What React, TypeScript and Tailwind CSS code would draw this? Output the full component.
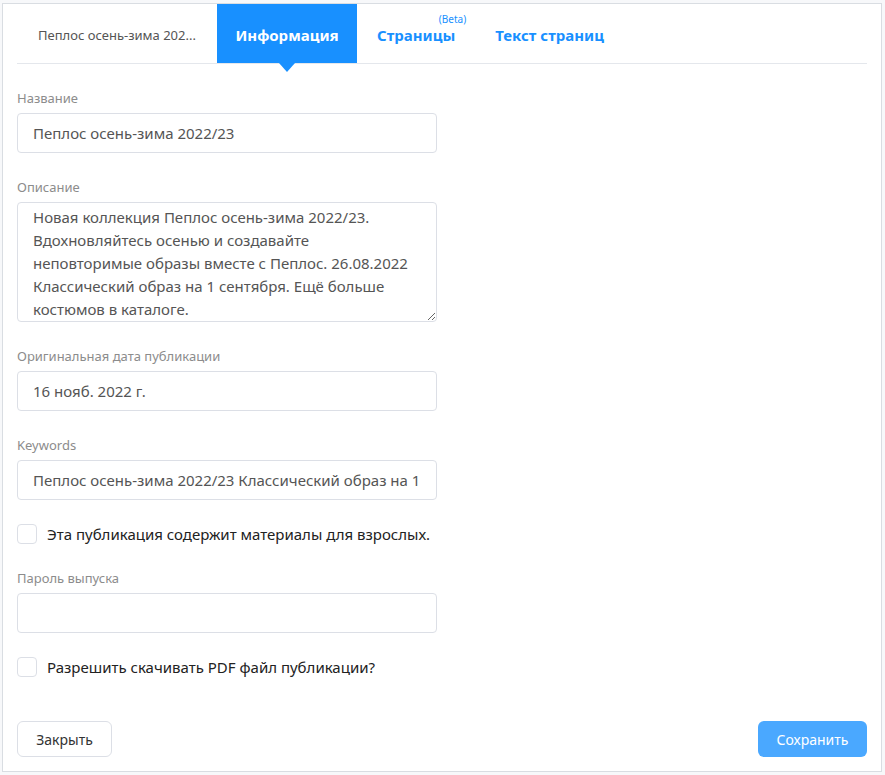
import { useState } from 'react';

const tabs = [
  { name: 'Информация', beta: false },
  { name: 'Страницы', beta: true },
  { name: 'Текст страниц', beta: false },
];

const description =
  'Новая коллекция Пеплос осень-зима 2022/23. Вдохновляйтесь осенью и создавайте неповторимые образы вместе с Пеплос. 26.08.2022 Классический образ на 1 сентября. Ещё больше костюмов в каталоге.';

function Field({ label, children }: { label: string; children: React.ReactNode }) {
  return (
    <div className="mb-6">
      <div className="h-5 mb-[5px] text-[13px] leading-5 text-[#8c8c8c]">{label}</div>
      {children}
    </div>
  );
}

function TextInput({ value }: { value: string }) {
  return (
    <input
      readOnly
      defaultValue={value}
      className="block w-[420px] h-10 px-[15px] rounded border border-[#dcdfe6] bg-white text-[15px] text-[#555] outline-none"
    />
  );
}

function Check({ label }: { label: string }) {
  const [on, setOn] = useState(false);
  return (
    <label className="mb-6 flex items-center gap-[10px] h-5 cursor-pointer">
      <span
        onClick={() => setOn(!on)}
        className={`w-5 h-5 rounded-sm border border-[#dcdfe6] ${on ? 'bg-[#1890ff]' : 'bg-white'}`}
      />
      <span className="text-[15px] text-[#222]">{label}</span>
    </label>
  );
}

export default function App() {
  return (
    <div className="min-h-screen bg-[#f7f8fa] pt-[3px] pl-[2px]" style={{ fontFamily: '"Noto Sans", "Open Sans", sans-serif' }}>
      <div className="w-[880px] h-[769px] bg-white border border-[#d9dde2] px-[14px] flex flex-col">
        {/* Tabs */}
        <div className="flex h-[60px] border-b border-[#e4e7ec]">
          <div className="w-[200px] pt-1 flex items-center justify-center text-[13px] text-[#555]">Пеплос осень-зима 202...</div>
          {tabs.map((tab, i) => (
            <div
              key={tab.name}
              className={`relative px-5 pt-1 flex items-center text-[15px] leading-none font-bold ${
                i === 0 ? 'w-[140px] justify-center bg-[#1890ff] text-white' : 'text-[#1890ff]'
              }`}
            >
              {tab.name}
              {tab.beta && (
                <span className="absolute top-[10px] right-[9px] text-[10px] leading-none font-normal">(Beta)</span>
              )}
              {i === 0 && (
                <span className="absolute left-1/2 -bottom-[9px] -translate-x-1/2 w-0 h-0 border-l-[8px] border-r-[8px] border-t-[9px] border-l-transparent border-r-transparent border-t-[#1890ff]" />
              )}
            </div>
          ))}
        </div>

        {/* Form */}
        <div className="pt-6 flex-1">
          <Field label="Название">
            <TextInput value="Пеплос осень-зима 2022/23" />
          </Field>
          <Field label="Описание">
            <textarea
              readOnly
              defaultValue={description}
              className="block w-[420px] h-[120px] px-[15px] pt-[3px] rounded border border-[#dcdfe6] text-[15px] leading-[23px] text-[#555] outline-none overflow-hidden resize-y"
            />
          </Field>
          <Field label="Оригинальная дата публикации">
            <TextInput value="16 нояб. 2022 г." />
          </Field>
          <Field label="Keywords">
            <TextInput value="Пеплос осень-зима 2022/23 Классический образ на 1 сентября. Ещё больше костюмов в каталоге." />
          </Field>
          <Check label="Эта публикация содержит материалы для взрослых." />
          <Field label="Пароль выпуска">
            <TextInput value="" />
          </Field>
          <Check label="Разрешить скачивать PDF файл публикации?" />
        </div>

        {/* Footer */}
        <div className="flex justify-between pb-[14px]">
          <button className="w-[95px] h-9 rounded-md border border-[#dcdfe6] bg-white text-[14px] text-[#333]">Закрыть</button>
          <button className="w-[109px] h-9 rounded-md bg-[#4aa8ff] text-[14px] text-white">Сохранить</button>
        </div>
      </div>
    </div>
  );
}
